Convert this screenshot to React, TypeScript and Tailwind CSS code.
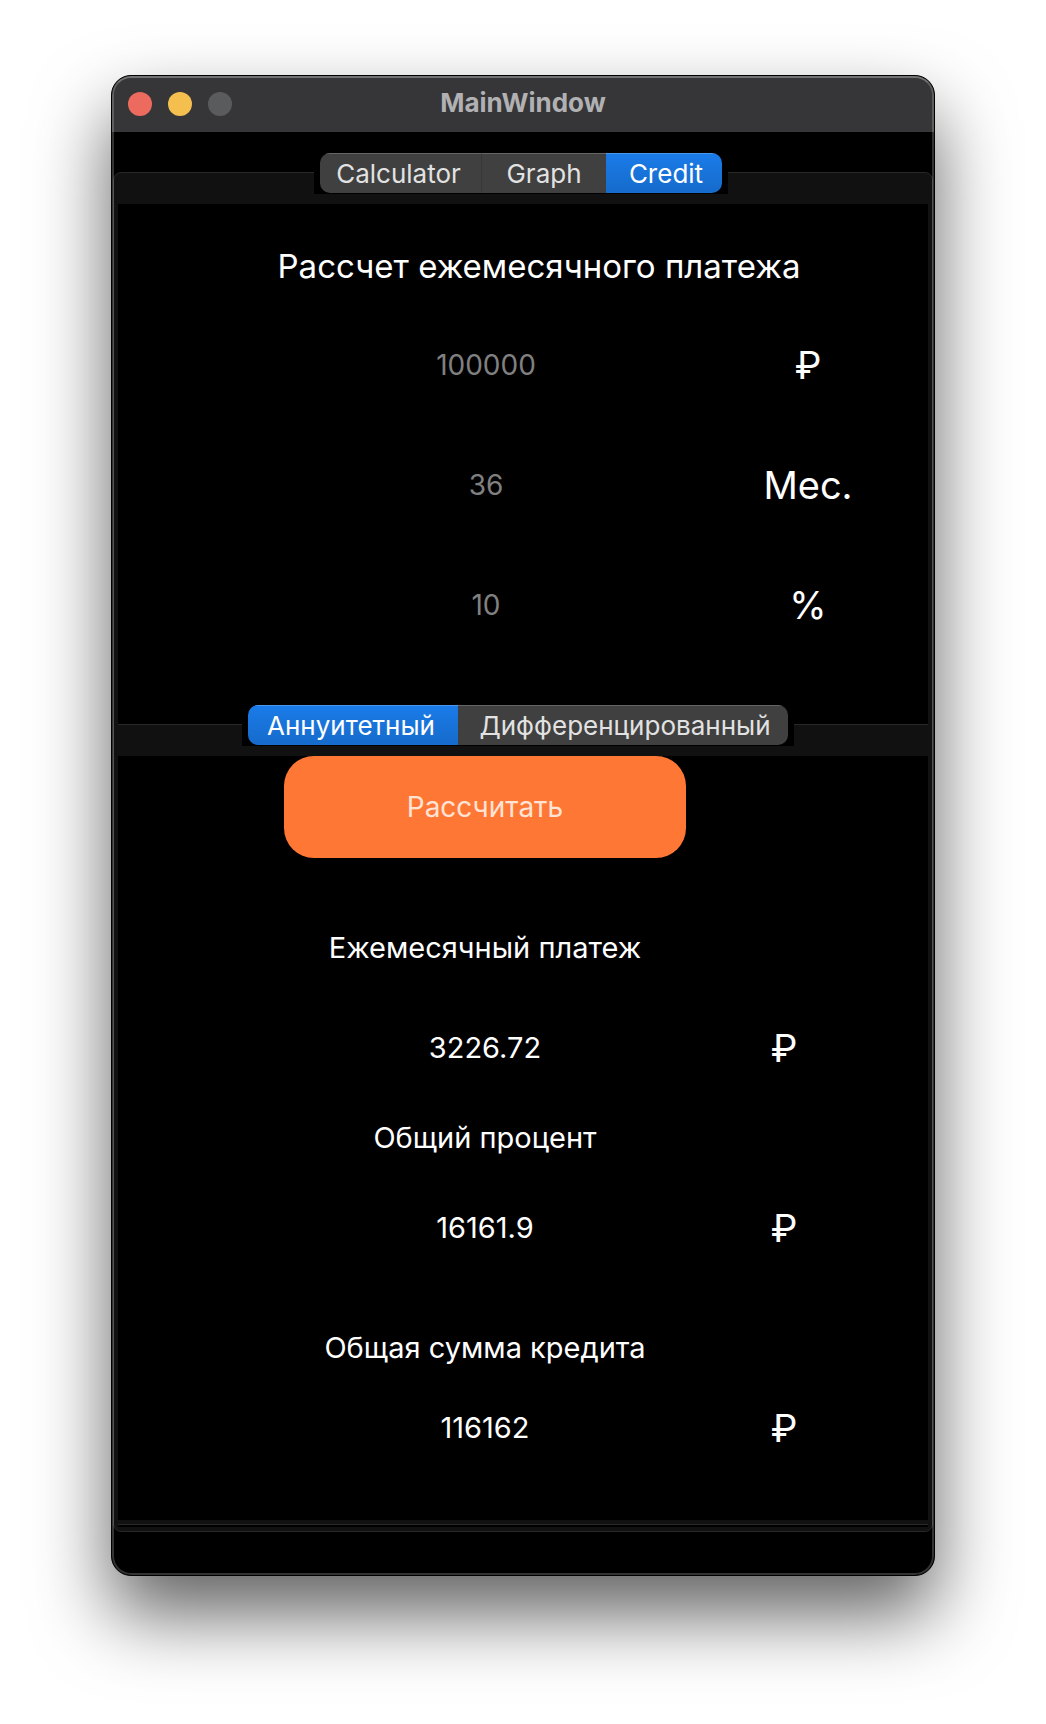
import { useState } from "react";

function Segments({ label, items, active, onSelect, className }: {
  label: string;
  items: { name: string; className: string }[];
  active: number;
  onSelect: (index: number) => void;
  className: string;
}) {
  return (
    <div className={"relative z-10 -mb-[22px] flex justify-center " + className}>
      <div className="bg-black px-1.5 pb-px">
        <div role="tablist" aria-label={label} className="flex h-10 overflow-hidden rounded-[10px]">
          {items.map((item, i) => (
            <button
              key={item.name}
              type="button"
              role="tab"
              aria-selected={i === active}
              onClick={() => onSelect(i)}
              className={
                (i === active
                  ? "border-t border-[#4c98ee] bg-linear-to-b from-[#1a7be8] to-[#166bcb] text-white "
                  : "border-t border-[#666666] bg-[#404040] text-[#e2e2e2] ") +
                "text-[26px] leading-[38px] whitespace-nowrap " +
                item.className
              }
            >
              {item.name}
            </button>
          ))}
        </div>
      </div>
    </div>
  );
}

function Field({ label, placeholder, unit, value, onChange }: {
  label: string;
  placeholder: string;
  unit: string;
  value: string;
  onChange: (value: string) => void;
}) {
  return (
    <div className="grid h-[120px] grid-cols-[166fr_404fr_240fr] items-center">
      <input
        aria-label={label}
        placeholder={placeholder}
        value={value}
        onChange={(e) => onChange(e.target.value)}
        className="col-start-2 h-20 w-full bg-transparent text-center text-[28px] text-white outline-none placeholder:text-[#808080]"
      />
      <span className="text-center text-[38px]">{unit}</span>
    </div>
  );
}

function Result({ label, value, className }: { label: string; value: string; className: string }) {
  return (
    <div className={"grid grid-cols-[166fr_402fr_196fr_46fr] items-center text-center text-[29px] " + className}>
      <dt className="col-start-2 flex h-20 items-center justify-center whitespace-nowrap">{label}</dt>
      <dd className="col-start-2 flex h-20 items-center justify-center">{value}</dd>
      <dd className="text-[38px]">₽</dd>
    </div>
  );
}

export default function App() {
  const [page, setPage] = useState(2);
  const [mode, setMode] = useState(0);
  const [sum, setSum] = useState("");
  const [months, setMonths] = useState("");
  const [rate, setRate] = useState("");
  const [result, setResult] = useState({ payment: "3226.72", interest: "16161.9", total: "116162" });

  const calculate = () => {
    const s = Number(sum || 100000);
    const n = Number(months || 36);
    const r = Number(rate || 10) / 1200;
    const payment = mode === 0 ? (s * r) / (1 - (1 + r) ** -n) : s / n + s * r;
    const total = mode === 0 ? payment * n : s + (s * r * (n + 1)) / 2;
    const show = (v: number) => String(Number(v.toPrecision(6)));
    setResult({ payment: show(payment), interest: show(total - s), total: show(total) });
  };

  return (
    <div className="min-h-screen bg-white px-[111px] pt-[75px] pb-[147px] font-['Inter',sans-serif] text-white">
      <main className="relative overflow-hidden rounded-[20px] border border-black bg-black pb-[43px] shadow-[0_38px_76px_rgba(0,0,0,0.62)]">
        <header className="grid h-14 grid-cols-[1fr_auto_1fr] items-center bg-[#363638] px-4">
          <div className="flex gap-4">
            <button type="button" aria-label="Close" className="size-6 rounded-full bg-[#ed6a5e]" />
            <button type="button" aria-label="Minimize" className="size-6 rounded-full bg-[#f5bf4f]" />
            <button type="button" aria-label="Zoom" disabled className="size-6 rounded-full bg-[#5a5b5d]" />
          </div>
          <h1 className="pb-0.5 text-[26px] leading-8 font-bold text-[#b1b1b3]">MainWindow</h1>
        </header>

        <div className="pt-[21px]">
          <Segments
            label="Pages"
            className="pr-1"
            active={page}
            onSelect={setPage}
            items={[
              { name: "Calculator", className: "w-[162px] border-r border-r-[#383838] pr-1" },
              { name: "Graph", className: "w-[124px]" },
              { name: "Credit", className: "w-[116px] pl-1" },
            ]}
          />
          <section className="mx-px rounded-lg border border-[#282828] bg-[#111111] px-1 pt-[31px] pb-1">
            <div className="bg-black pb-0.5">
              <h2 className="pt-11 pb-[21px] pl-8 text-center text-[33px] leading-9 whitespace-nowrap">
                Рассчет ежемесячного платежа
              </h2>
              <Field label="Сумма кредита" placeholder="100000" unit="₽" value={sum} onChange={setSum} />
              <Field label="Срок" placeholder="36" unit="Мес." value={months} onChange={setMonths} />
              <Field label="Ставка" placeholder="10" unit="%" value={rate} onChange={setRate} />

              <div className="pt-10">
                <Segments
                  label="Тип платежа"
                  className="pr-2.5"
                  active={mode}
                  onSelect={setMode}
                  items={[
                    { name: "Аннуитетный", className: "w-[210px] pr-1" },
                    { name: "Дифференцированный", className: "w-[330px] pl-1" },
                  ]}
                />
                <div className="border-y border-[#282828] bg-[#111111] pt-[31px] pb-1">
                  <div className="bg-black pb-[52px]">
                    <div className="grid grid-cols-[166fr_402fr_242fr]">
                      <button
                        type="button"
                        onClick={calculate}
                        className="col-start-2 h-[102px] rounded-[30px] bg-[#ff7734] text-[28px] text-[#ffe4d6]"
                      >
                        Рассчитать
                      </button>
                    </div>
                    <dl>
                      <Result label="Ежемесячный платеж" value={result.payment} className="mt-[50px] gap-y-5" />
                      <Result label="Общий процент" value={result.interest} className="mt-2.5 gap-y-2.5" />
                      <Result label="Общая сумма кредита" value={result.total} className="mt-10" />
                    </dl>
                  </div>
                </div>
              </div>
            </div>
          </section>
        </div>
        <div className="pointer-events-none absolute inset-0 z-20 rounded-[19px] border-2 border-white/20 border-t-white/30" />
      </main>
    </div>
  );
}
